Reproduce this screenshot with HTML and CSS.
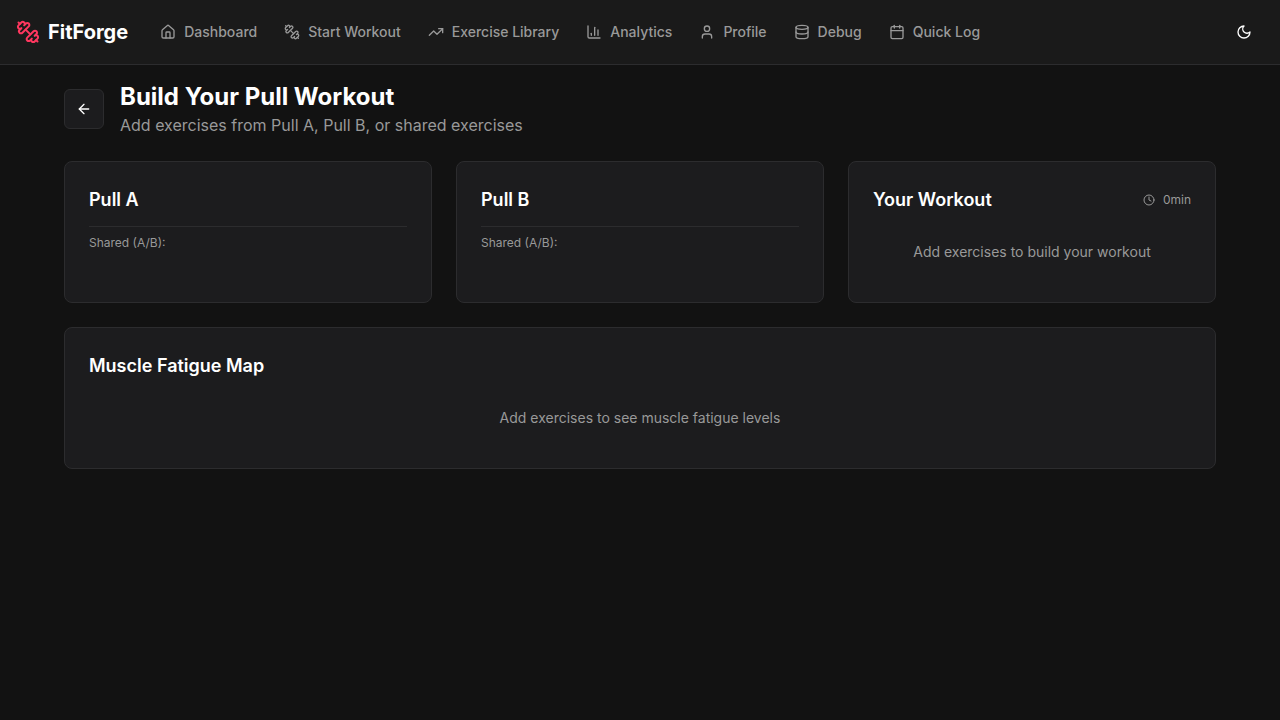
FILE: index.html
```html
<!DOCTYPE html>
<html lang="en">
<head>
  <meta charset="utf-8">
  <meta name="viewport" content="width=device-width, initial-scale=1">
  <title>FitForge</title>
  <link rel="stylesheet" href="styles.css">
</head>
<body>
  <svg class="sprite" aria-hidden="true">
    <symbol id="dumbbell" viewBox="0 0 24 24">
      <path d="M14.4 14.4 9.6 9.6"/>
      <path d="M18.657 21.485a2 2 0 1 1-2.829-2.828l-1.767 1.768a2 2 0 1 1-2.829-2.829l6.364-6.364a2 2 0 1 1 2.829 2.829l-1.768 1.767a2 2 0 1 1 2.828 2.829z"/>
      <path d="m21.5 21.5-1.4-1.4"/>
      <path d="M3.9 3.9 2.5 2.5"/>
      <path d="M6.404 12.768a2 2 0 1 1-2.829-2.829l1.768-1.767a2 2 0 1 1-2.828-2.829l2.828-2.828a2 2 0 1 1 2.829 2.828l1.767-1.768a2 2 0 1 1 2.829 2.829z"/>
    </symbol>
  </svg>

  <header class="topbar">
    <a class="brand" href="#">
      <svg class="icon icon-lg brand-mark" aria-hidden="true"><use href="#dumbbell"/></svg>
      <span>FitForge</span>
    </a>
    <nav class="nav" aria-label="Main">
      <a class="nav-link" href="#">
        <svg class="icon" viewBox="0 0 24 24" aria-hidden="true"><path d="M15 21v-8a1 1 0 0 0-1-1h-4a1 1 0 0 0-1 1v8"/><path d="M3 10a2 2 0 0 1 .709-1.528l7-5.999a2 2 0 0 1 2.582 0l7 5.999A2 2 0 0 1 21 10v9a2 2 0 0 1-2 2H5a2 2 0 0 1-2-2z"/></svg>
        <span>Dashboard</span>
      </a>
      <a class="nav-link" href="#">
        <svg class="icon" aria-hidden="true"><use href="#dumbbell"/></svg>
        <span>Start Workout</span>
      </a>
      <a class="nav-link" href="#">
        <svg class="icon" viewBox="0 0 24 24" aria-hidden="true"><path d="m22 7-8.500 8.500-5-5L2 17"/><path d="M16 7h6v6"/></svg>
        <span>Exercise Library</span>
      </a>
      <a class="nav-link" href="#">
        <svg class="icon" viewBox="0 0 24 24" aria-hidden="true"><path d="M3 3v16a2 2 0 0 0 2 2h16"/><path d="M18 17V9"/><path d="M13 17V5"/><path d="M8 17v-3"/></svg>
        <span>Analytics</span>
      </a>
      <a class="nav-link" href="#">
        <svg class="icon" viewBox="0 0 24 24" aria-hidden="true"><path d="M19 21v-2a4 4 0 0 0-4-4H9a4 4 0 0 0-4 4v2"/><circle cx="12" cy="7" r="4"/></svg>
        <span>Profile</span>
      </a>
      <a class="nav-link" href="#">
        <svg class="icon" viewBox="0 0 24 24" aria-hidden="true"><ellipse cx="12" cy="5" rx="9" ry="3"/><path d="M3 5v14a9 3 0 0 0 18 0V5"/><path d="M3 12a9 3 0 0 0 18 0"/></svg>
        <span>Debug</span>
      </a>
      <a class="nav-link" href="#">
        <svg class="icon" viewBox="0 0 24 24" aria-hidden="true"><path d="M8 2v4"/><path d="M16 2v4"/><rect width="18" height="18" x="3" y="4" rx="2"/><path d="M3 10h18"/></svg>
        <span>Quick Log</span>
      </a>
    </nav>
    <button class="theme-toggle" type="button" aria-label="Toggle theme">
      <svg class="icon" viewBox="0 0 24 24" aria-hidden="true"><path d="M12 3a6 6 0 0 0 9 9 9 9 0 1 1-9-9Z"/></svg>
    </button>
  </header>

  <main class="page">
    <div class="page-head">
      <button class="back" type="button" aria-label="Back">
        <svg class="icon" viewBox="0 0 24 24" aria-hidden="true"><path d="m12 19-7-7 7-7"/><path d="M19 12H5"/></svg>
      </button>
      <div>
        <h1 class="page-title">Build Your Pull Workout</h1>
        <p class="page-subtitle">Add exercises from Pull A, Pull B, or shared exercises</p>
      </div>
    </div>

    <div class="columns">
      <section class="card">
        <h2 class="card-title">Pull A</h2>
        <p class="shared">Shared (A/B):</p>
      </section>
      <section class="card">
        <h2 class="card-title">Pull B</h2>
        <p class="shared">Shared (A/B):</p>
      </section>
      <section class="card">
        <div class="card-head">
          <h2 class="card-title">Your Workout</h2>
          <div class="duration">
            <svg class="icon icon-sm" viewBox="0 0 24 24" aria-hidden="true"><circle cx="12" cy="12" r="10"/><path d="M12 6v6l4 2"/></svg>
            <span>0min</span>
          </div>
        </div>
        <p class="empty">Add exercises to build your workout</p>
      </section>
    </div>

    <section class="card">
      <h2 class="card-title">Muscle Fatigue Map</h2>
      <p class="empty">Add exercises to see muscle fatigue levels</p>
    </section>
  </main>
</body>
</html>
```
FILE: styles.css
```css
*,
*::before,
*::after {
  box-sizing: border-box;
}

:root {
  --bg: #121212;
  --bar: #1a1a1a;
  --card: #1c1c1e;
  --line: #2c2c2e;
  --text: #ffffff;
  --muted: #999999;
  --primary: #ff375f;
}

body {
  margin: 0;
  min-height: 100vh;
  background: var(--bg);
  color: var(--text);
  font: 16px/24px Inter, "Liberation Sans", sans-serif;
}

h1,
h2,
p {
  margin: 0;
}

a {
  color: inherit;
  text-decoration: none;
}

button {
  display: inline-flex;
  align-items: center;
  justify-content: center;
  width: 40px;
  height: 40px;
  padding: 0;
  border: 0;
  border-radius: 6px;
  background: transparent;
  color: var(--text);
  cursor: pointer;
}

.sprite {
  position: absolute;
  width: 0;
  height: 0;
}

.icon {
  flex: none;
  width: 16px;
  height: 16px;
  fill: none;
  stroke: currentColor;
  stroke-width: 2;
  stroke-linecap: round;
  stroke-linejoin: round;
}

.icon-sm {
  width: 12px;
  height: 12px;
}

.icon-lg {
  width: 24px;
  height: 24px;
}

.topbar {
  position: sticky;
  top: 0;
  z-index: 10;
  display: flex;
  align-items: center;
  gap: 32px;
  padding: 12px 16px;
  border-bottom: 1px solid var(--line);
  background: var(--bar);
  backdrop-filter: blur(8px);
}

.brand {
  display: flex;
  align-items: center;
  gap: 8px;
  font-size: 20px;
  line-height: 28px;
  font-weight: 700;
}

.brand-mark {
  color: var(--primary);
}

.nav {
  display: flex;
  flex: 1;
  align-items: center;
  gap: 27px;
  color: var(--muted);
  font-size: 14px;
  line-height: 20px;
  font-weight: 500;
}

.nav-link {
  display: flex;
  align-items: center;
  gap: 8px;
}

.page {
  display: flex;
  flex-direction: column;
  gap: 24px;
  max-width: 1184px;
  margin: 0 auto;
  padding: 16px;
}

.page-head {
  display: flex;
  align-items: center;
  gap: 16px;
}

.back {
  border: 1px solid var(--line);
  background: var(--card);
}

.page-title {
  font-size: 24px;
  line-height: 32px;
  font-weight: 700;
}

.page-subtitle {
  color: var(--muted);
}

.columns {
  display: grid;
  grid-template-columns: repeat(3, minmax(0, 1fr));
  gap: 24px;
}

.card {
  display: flex;
  flex-direction: column;
  gap: 12px;
  padding: 24px;
  border: 1px solid var(--line);
  border-radius: 8px;
  background: var(--card);
}

.card-head {
  display: flex;
  align-items: center;
  justify-content: space-between;
}

.card-title {
  font-size: 18px;
  line-height: 28px;
  font-weight: 600;
}

.shared {
  padding-top: 8px;
  border-top: 1px solid var(--line);
  color: var(--muted);
  font-size: 12px;
  line-height: 16px;
}

.duration {
  display: flex;
  align-items: center;
  gap: 8px;
  color: var(--muted);
  font-size: 12px;
  line-height: 16px;
}

.empty {
  padding: 16px 0;
  color: var(--muted);
  font-size: 14px;
  line-height: 20px;
  text-align: center;
}
```
